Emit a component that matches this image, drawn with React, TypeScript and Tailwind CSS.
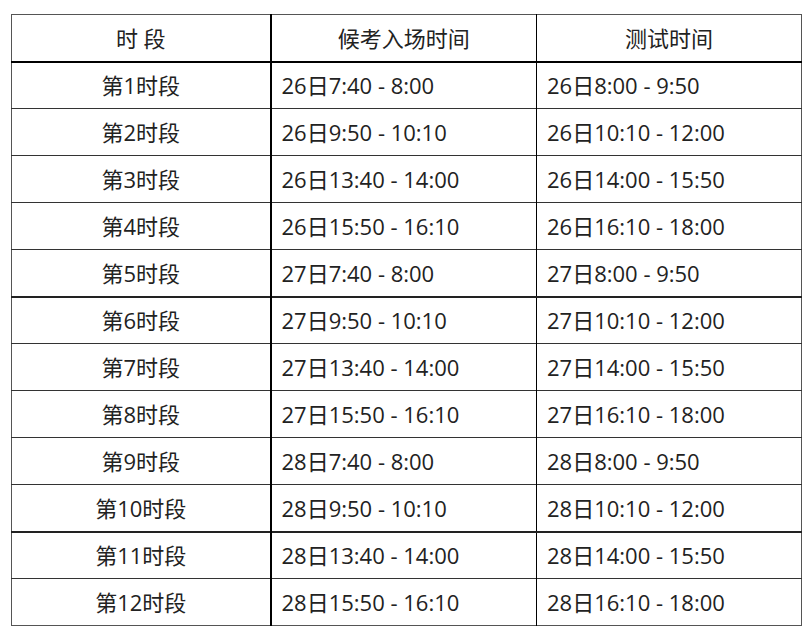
const rows = [
  ["第1时段", "26日7:40 - 8:00", "26日8:00 - 9:50"],
  ["第2时段", "26日9:50 - 10:10", "26日10:10 - 12:00"],
  ["第3时段", "26日13:40 - 14:00", "26日14:00 - 15:50"],
  ["第4时段", "26日15:50 - 16:10", "26日16:10 - 18:00"],
  ["第5时段", "27日7:40 - 8:00", "27日8:00 - 9:50"],
  ["第6时段", "27日9:50 - 10:10", "27日10:10 - 12:00"],
  ["第7时段", "27日13:40 - 14:00", "27日14:00 - 15:50"],
  ["第8时段", "27日15:50 - 16:10", "27日16:10 - 18:00"],
  ["第9时段", "28日7:40 - 8:00", "28日8:00 - 9:50"],
  ["第10时段", "28日9:50 - 10:10", "28日10:10 - 12:00"],
  ["第11时段", "28日13:40 - 14:00", "28日14:00 - 15:50"],
  ["第12时段", "28日15:50 - 16:10", "28日16:10 - 18:00"],
];

// rows after which the rule is drawn heavier
const heavy = [4, 9];

export default function App() {
  return (
    <div
      className="w-[811px] h-[636px] overflow-hidden bg-white text-[#222] pt-[14px] pl-[11px]"
      style={{ fontFamily: '"Open Sans", "Noto Sans CJK SC", sans-serif' }}
    >
      <table className="table-fixed border-collapse w-[790px] text-[22px] leading-none border border-[#555]">
        <colgroup>
          <col className="w-[259px]" />
          <col className="w-[266px]" />
          <col className="w-[265px]" />
        </colgroup>
        <thead>
          <tr className="h-[47px] border-b-2 border-black">
            <th className="font-normal text-center border-r-2 border-black">时 段</th>
            <th className="font-normal text-center border-r border-black">候考入场时间</th>
            <th className="font-normal text-center">测试时间</th>
          </tr>
        </thead>
        <tbody>
          {rows.map((r, i) => (
            <tr
              key={r[0]}
              className={
                i === rows.length - 1
                  ? "h-[47px]"
                  : heavy.includes(i)
                  ? "h-[47px] border-b-2 border-[#222]"
                  : "h-[47px] border-b border-[#333]"
              }
            >
              <td className="text-center border-r-2 border-black">{r[0]}</td>
              <td className="pl-[10px] border-r border-black">{r[1]}</td>
              <td className="pl-[10px]">{r[2]}</td>
            </tr>
          ))}
        </tbody>
      </table>
    </div>
  );
}
